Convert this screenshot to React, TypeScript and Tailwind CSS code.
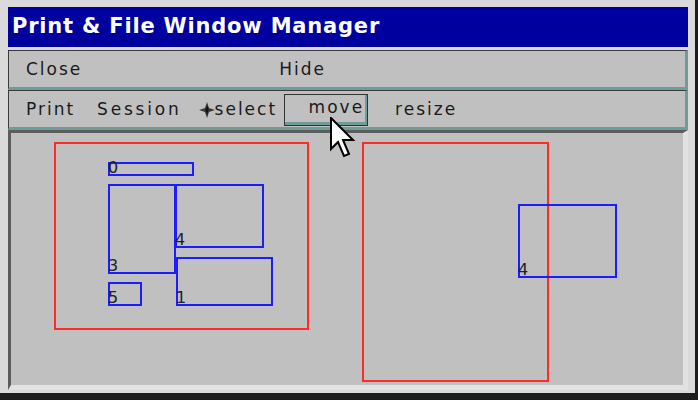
import React from 'react'

type Box = { x1: number; y1: number; x2: number; y2: number; color: 'red' | 'blue'; label?: string }

// page coordinates of the drawn frames
const boxes: Box[] = [
  { x1: 54, y1: 142, x2: 309, y2: 330, color: 'red' },
  { x1: 362, y1: 142, x2: 549, y2: 382, color: 'red' },
  { x1: 108, y1: 162, x2: 194, y2: 176, color: 'blue', label: '0' },
  { x1: 108, y1: 184, x2: 176, y2: 274, color: 'blue', label: '3' },
  { x1: 175, y1: 184, x2: 264, y2: 248, color: 'blue', label: '4' },
  { x1: 176, y1: 257, x2: 273, y2: 306, color: 'blue', label: '1' },
  { x1: 108, y1: 282, x2: 142, y2: 306, color: 'blue', label: '5' },
  { x1: 518, y1: 204, x2: 617, y2: 278, color: 'blue', label: '4' },
]

const OX = 11
const OY = 133

const font = { fontFamily: '"DejaVu Sans", Verdana, sans-serif' }

function Cursor() {
  return (
    <svg className="absolute left-[330px] top-[117px]" width="28" height="44" viewBox="0 0 14 22">
      <path
        d="M0.5 0.5 L0.5 16 L4 12.5 L7 19.5 L9.5 18.5 L6.5 11.5 L11.5 11.5 Z"
        fill="white"
        stroke="black"
        strokeWidth="1"
        strokeLinejoin="miter"
      />
    </svg>
  )
}

export default function App() {
  return (
    <div
      className="relative w-[698px] h-[400px] bg-[#dadada] border-r-[3px] border-b-[7px] border-[#1c1c1c] pl-[8px] pt-[7px] pr-[7px] pb-[3px] flex flex-col"
      style={font}
    >
      {/* title */}
      <div className="h-[40px] bg-[#00009f] flex items-center pl-[4px] shrink-0">
        <span className="text-white font-bold text-[21px] tracking-[0.8px]">Print &amp; File Window Manager</span>
      </div>
      <div className="h-[3px] shrink-0" />

      {/* menu bar */}
      <div className="h-[40px] shrink-0 bg-[#c0c0c0] border-t border-l border-[#3a3a3a] border-r-[3px] border-b-[3px] border-r-[#6e9c98] border-b-[#6e9c98] flex items-center pt-[2px] text-[17px] text-[#1a1a1a] tracking-[2px]">
        <span className="ml-[17px]">Close</span>
        <span className="ml-[197px]">Hide</span>
      </div>

      {/* tool bar */}
      <div className="h-[40px] shrink-0 bg-[#c0c0c0] border-t border-l border-[#3a3a3a] border-r-[3px] border-b-[3px] border-r-[#6e9c98] border-b-[#6e9c98] flex items-center pt-[1px] text-[17px] text-[#1a1a1a] tracking-[2px]">
        <span className="ml-[17px]">Print</span>
        <span className="ml-[22px] tracking-[2.8px]">Session</span>
        <span className="ml-[17px] flex items-center">
          <svg width="16" height="16" viewBox="0 0 16 16">
            <path d="M8 0 L10 6 L16 8 L10 10 L8 16 L6 10 L0 8 L6 6 Z" fill="#3a3a3a" />
            <path d="M8 3 L9.5 8 L8 13 L6.5 8 Z" fill="#111" />
          </svg>
          select
        </span>
        <div className="ml-[7px] w-[84px] h-[32px] border border-[#333] bg-[#c0c0c0] flex">
          <div className="flex-1 border-b-[3px] border-r-[2px] border-[#6e9c98] flex items-center justify-end pr-[1px]">
            move
          </div>
        </div>
        <span className="ml-[27px]">resize</span>
      </div>

      {/* canvas */}
      <div className="relative flex-1 bg-[#c0c0c0] border-t-[3px] border-l-[3px] border-[#5c5c5c] border-r-[5px] border-b-[5px] border-r-[#e2e2e2] border-b-[#e2e2e2] overflow-hidden">
        {boxes.map((b, i) => (
          <React.Fragment key={i}>
            <div
              className={`absolute border-2 ${b.color === 'red' ? 'border-[#ff2a2a]' : 'border-[#1c1cff]'}`}
              style={{ left: b.x1 - OX, top: b.y1 - OY, width: b.x2 - b.x1, height: b.y2 - b.y1 }}
            />
            {b.label && (
              <span
                className="absolute text-[16px] leading-[16px] text-[#222]"
                style={{ left: b.x1 - OX, top: b.y2 - OY - 16 }}
              >
                {b.label}
              </span>
            )}
          </React.Fragment>
        ))}
      </div>

      <Cursor />
    </div>
  )
}
